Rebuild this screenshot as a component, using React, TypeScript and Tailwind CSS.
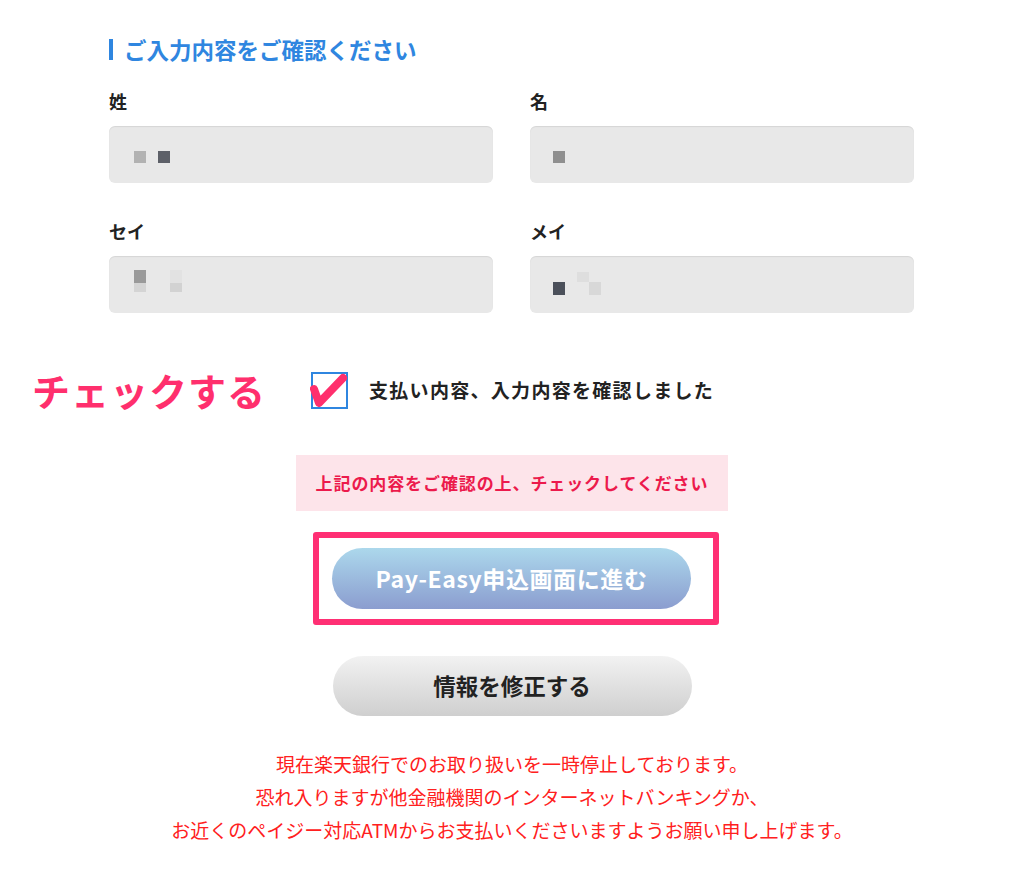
const font = "font-['Noto_Sans_CJK_JP','Noto_Sans',sans-serif]";

type Block = { x: number; y: number; w: number; h: number; c: string };

const Field = ({ label, blocks }: { label: string; blocks: Block[] }) => (
  <div>
    <div className="h-[38px] flex items-center text-[18px] font-bold text-[#222]">{label}</div>
    <div className="mt-[6px] h-[57px] rounded-[6px] bg-[#e8e8e8] shadow-[inset_0_1px_1px_rgba(0,0,0,0.08)] relative">
      {blocks.map((b, i) => (
        <span
          key={i}
          className="absolute"
          style={{ left: b.x, top: b.y, width: b.w, height: b.h, background: b.c }}
        />
      ))}
    </div>
  </div>
);

export default function App() {
  return (
    <div className={`min-h-[871px] w-[1024px] bg-white ${font}`}>
      <div className="w-[806px] mx-auto pt-[36px]">
        <div className="flex items-center gap-[11px]">
          <span className="w-[4px] h-[21px] bg-[#2f86e0]" />
          <h2 className="text-[22.5px] font-bold text-[#2f86e0] leading-[26px]">ご入力内容をご確認ください</h2>
        </div>

        <div className="mt-[20px] grid grid-cols-[384px_384px] gap-x-[37px] gap-y-[29px]">
          <Field
            label="姓"
            blocks={[
              { x: 25, y: 25, w: 12, h: 12, c: "#b2b2b2" },
              { x: 49, y: 25, w: 12, h: 12, c: "#5d6068" },
            ]}
          />
          <Field label="名" blocks={[{ x: 23, y: 25, w: 12, h: 12, c: "#8f8f8f" }]} />
          <Field
            label="セイ"
            blocks={[
              { x: 25, y: 14, w: 12, h: 13, c: "#9a9a9a" },
              { x: 25, y: 27, w: 12, h: 9, c: "#d4d4d4" },
              { x: 61, y: 14, w: 12, h: 13, c: "#e2e2e2" },
              { x: 61, y: 27, w: 12, h: 9, c: "#d2d2d2" },
            ]}
          />
          <Field
            label="メイ"
            blocks={[
              { x: 23, y: 26, w: 12, h: 13, c: "#4b505a" },
              { x: 47, y: 16, w: 12, h: 10, c: "#dedede" },
              { x: 59, y: 26, w: 12, h: 13, c: "#d8d8d8" },
            ]}
          />
        </div>
      </div>

      <div className="mt-[57px] flex items-center pl-[32px]">
        <div className="w-[279px] text-[38px] font-bold text-[#ff2f6d] leading-[40px] tracking-[1px]">チェックする</div>
        <div className="relative w-[37px] h-[37px] border-2 border-[#2f86e0] bg-white">
          <svg className="absolute left-[-3px] top-[-2px] w-[40px] h-[40px]" viewBox="0 0 40 40">
            <path
              d="M4 17 L9 31 L33 6"
              fill="none"
              stroke="#ff2f6d"
              strokeWidth="8"
              strokeLinecap="round"
              strokeLinejoin="round"
            />
          </svg>
        </div>
        <div className="ml-[21px] text-[19px] font-bold text-[#222] tracking-[1.3px]">支払い内容、入力内容を確認しました</div>
      </div>

      <div className="mt-[45px] flex flex-col items-center">
        <div className="w-[432px] h-[56px] bg-[#fde4ea] flex items-center justify-center text-[17px] font-bold text-[#ec1a4c] tracking-[0.9px]">
          上記の内容をご確認の上、チェックしてください
        </div>

        <div className="mt-[21px] ml-[8px] w-[406px] h-[93px] border-[6px] border-[#ff2f74] rounded-[3px] flex items-center pl-[13px]">
          <button className="w-[359px] h-[61px] rounded-full bg-gradient-to-b from-[#acd8ec] to-[#8b9dcf] text-white text-[23px] font-bold tracking-[0.6px]">
            Pay-Easy申込画面に進む
          </button>
        </div>

        <button className="mt-[31px] w-[359px] h-[60px] rounded-full bg-gradient-to-b from-[#f2f2f2] to-[#cfcfcf] text-[#222] text-[22.5px] font-bold">
          情報を修正する
        </button>

        <div className="mt-[31px] text-center text-[19px] leading-[33px] text-[#ff2020]">
          <p>現在楽天銀行でのお取り扱いを一時停止しております。</p>
          <p>恐れ入りますが他金融機関のインターネットバンキングか、</p>
          <p>お近くのペイジー対応ATMからお支払いくださいますようお願い申し上げます。</p>
        </div>
      </div>
    </div>
  );
}
